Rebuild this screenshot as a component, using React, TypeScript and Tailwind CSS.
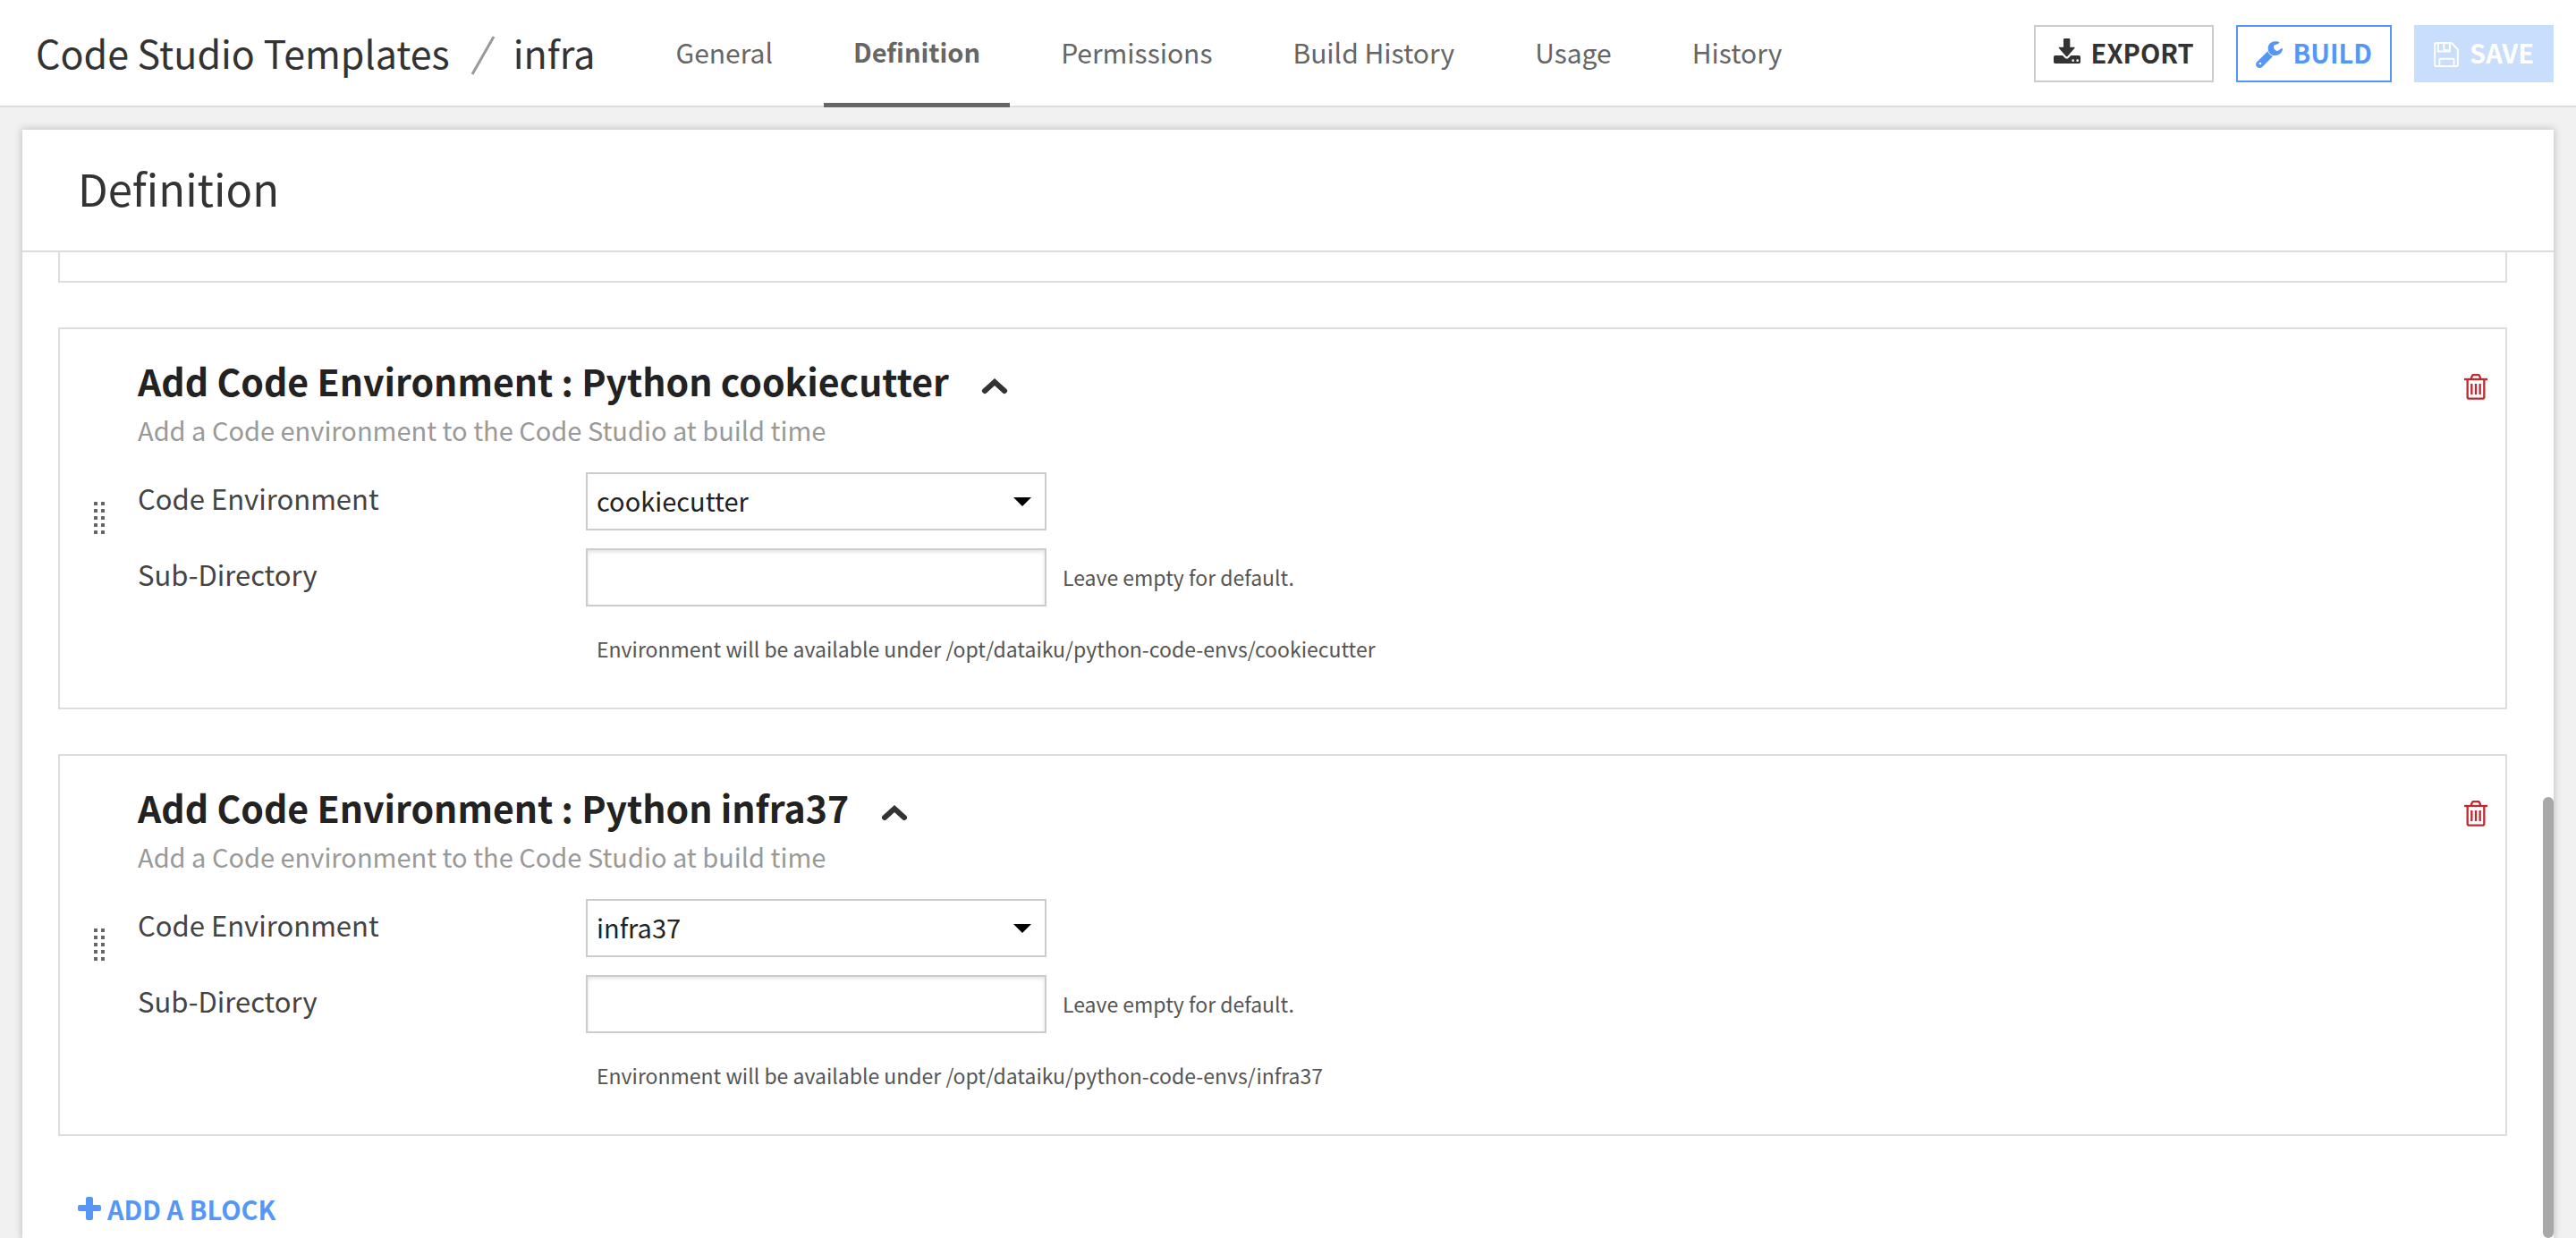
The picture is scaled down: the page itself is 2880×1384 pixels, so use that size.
import { useState } from "react";

const TABS = ["General", "Definition", "Permissions", "Build History", "Usage", "History"];
const ENVIRONMENTS = ["cookiecutter", "infra37"];

function ExportIcon() {
  return (
    <svg viewBox="0 0 90 84" className="mb-1 h-7 w-[30px] fill-current" aria-hidden="true">
      <path d="M36 0h16q3 0 3 3v26h14q4 0 1 4L47 59q-3 3-6 0L18 33q-3-4 1-4h14V3q0-3 3-3Z" />
      <path
        fillRule="evenodd"
        d="M5 57h25l9 9q5 4 10 0l9-9h27q5 0 5 5v17q0 5-5 5H5q-5 0-5-5V62q0-5 5-5Zm60 13a4 4 0 1 0 0 8 4 4 0 0 0 0-8Zm15 0a4 4 0 1 0 0 8 4 4 0 0 0 0-8Z"
      />
    </svg>
  );
}

function WrenchIcon() {
  return (
    <svg viewBox="0 0 90 90" className="mt-1 size-[30px] fill-current" aria-hidden="true">
      <path d="M66 1C50 0 40 12 41 26c1 14 11 23 24 22 13 0 23-9 25-21 0-3-2-4-5-2l-11 8c-7 0-13-5-14-12l1-7 15-6c4-2 4-5 0-6-3-1-6-1-10-1Z" />
      <path
        fillRule="evenodd"
        d="M40 34q5 13 17 17L22 86c-5 5-13 5-18 0-5-4-5-11 0-16Zm-25 37a4 4 0 1 0 0 8 4 4 0 0 0 0-8Z"
      />
    </svg>
  );
}

function SaveIcon() {
  return (
    <svg viewBox="0 0 84 85" className="mt-1 size-7 fill-none stroke-current" strokeWidth="6" strokeLinejoin="round" aria-hidden="true">
      <path d="M6 3h54l21 22v54q0 3-3 3H6q-3 0-3-3V6q0-3 3-3Z" />
      <path d="M14 3v29h40V3M34 4v24h16" />
      <path d="M19 82V60q0-3 3-3h43q3 0 3 3v22" />
    </svg>
  );
}

function TrashIcon() {
  return (
    <svg viewBox="0 0 78 87" className="h-[29px] w-[26px] fill-none stroke-current" strokeWidth="7" aria-hidden="true">
      <path d="M0 18h78" />
      <path d="M23 17l3-9q2-5 6-5h14q4 0 6 5l3 9" />
      <path d="M11 18v60q0 5 6 5h44q6 0 6-5V18" />
      <path d="M25 33v36M39 33v36M53 33v36" />
    </svg>
  );
}

function ChevronUp() {
  return (
    <svg viewBox="0 0 30 20" className="h-5 w-[30px] fill-none stroke-[#333]" strokeWidth="6" strokeLinecap="round" aria-hidden="true">
      <path d="M4 15 15 5l11 10" />
    </svg>
  );
}

function DragHandle() {
  return (
    <span className="grid cursor-grab grid-cols-2 gap-1" role="img" aria-label="Drag to reorder">
      {Array.from({ length: 10 }, (_, i) => (
        <span key={i} className="size-1 bg-[#666]" />
      ))}
    </span>
  );
}

function EnvironmentBlock({ name }: { name: string }) {
  const [env, setEnv] = useState(name);
  const [dir, setDir] = useState("");
  const envId = `env-${name}`;
  const dirId = `dir-${name}`;
  return (
    <section className="mt-[50px] flex border-2 border-[#ddd]">
      <div className="flex w-[87px] shrink-0 items-center pb-0.5 pl-[38px]">
        <DragHandle />
      </div>
      <div className="min-w-0 flex-1 pt-[27px] pb-[46px]">
        <div className="flex items-center gap-9">
          <h2 className="text-[41px] leading-[60px] font-bold text-[#222]">Add Code Environment : Python {name}</h2>
          <button type="button" aria-label="Collapse block" className="pt-[14px]">
            <ChevronUp />
          </button>
        </div>
        <p className="mt-[5px] text-[29px] leading-10 text-[#999]">Add a Code environment to the Code Studio at build time</p>
        <div className="mt-7 flex items-center">
          <label htmlFor={envId} className="w-[501px] shrink-0 pb-2 text-[31px] leading-10 text-[#444]">
            Code Environment
          </label>
          <div className="relative w-[515px]">
            <select
              id={envId}
              value={env}
              onChange={(e) => setEnv(e.target.value)}
              className="block h-[65px] w-full appearance-none border-2 border-[#ccc] bg-white pr-14 pb-0.5 pl-[10px] text-[29px] text-[#222]"
            >
              {ENVIRONMENTS.map((e) => (
                <option key={e}>{e}</option>
              ))}
            </select>
            <svg viewBox="0 0 20 10" className="pointer-events-none absolute top-[28px] right-[17px] h-2.5 w-5" aria-hidden="true">
              <path d="M0 0h20L10 10Z" />
            </svg>
          </div>
        </div>
        <div className="mt-5 flex items-center">
          <label htmlFor={dirId} className="w-[501px] shrink-0 pb-2 text-[31px] leading-10 text-[#444]">
            Sub-Directory
          </label>
          <input
            id={dirId}
            type="text"
            value={dir}
            onChange={(e) => setDir(e.target.value)}
            className="h-[65px] w-[515px] border-2 border-[#ccc] bg-white px-[10px] text-[29px] text-[#222] shadow-[inset_0_2px_4px_rgba(0,0,0,0.12)]"
          />
          <span className="ml-[18px] pb-0.5 text-[23px] leading-10 text-[#555]">Leave empty for default.</span>
        </div>
        <p className="mt-[27px] ml-[513px] text-[23px] leading-10 text-[#555]">
          Environment will be available under /opt/dataiku/python-code-envs/{env}
        </p>
      </div>
      <button type="button" aria-label="Delete block" className="mt-[50px] mr-5 self-start text-[#be2a30]">
        <TrashIcon />
      </button>
    </section>
  );
}

export default function App() {
  return (
    <div className="flex h-screen flex-col overflow-hidden bg-[#f1f1f1] font-['Noto_Sans_CJK_SC',sans-serif] text-[#333]">
      <header className="flex h-[120px] shrink-0 items-center bg-white pr-[25px] pl-10 shadow-[inset_0_-2px_0_#ddd]">
        <div className="flex items-center pb-1 text-[43px] leading-[60px]">
          <a href="#templates">Code Studio Templates</a>
          <svg viewBox="0 0 28 44" className="mt-2 ml-[23px] h-11 w-7 stroke-[#999]" strokeWidth="3" aria-hidden="true">
            <path d="M26 1 2 43" />
          </svg>
          <span className="ml-5">infra</span>
        </div>
        <nav className="ml-[57px] flex gap-6 self-stretch text-[30px]">
          {TABS.map((tab) => (
            <a
              key={tab}
              href={`#${tab.toLowerCase().replace(" ", "-")}`}
              aria-current={tab === "Definition" ? "page" : undefined}
              className={
                tab === "Definition"
                  ? "flex items-center border-b-[5px] border-[#666] px-[33px] pt-px text-[29px] font-bold text-[#666]"
                  : "flex items-center px-[33px] pb-1 text-[#666]"
              }
            >
              {tab}
            </a>
          ))}
        </nav>
        <div className="ml-auto flex gap-[25px] text-[29px] font-bold">
          <button type="button" className="flex h-16 items-center gap-3 border-2 border-[#ccc] px-5 pb-0.5">
            <ExportIcon />
            EXPORT
          </button>
          <button type="button" className="flex h-16 items-center gap-3 border-2 border-[#5597f6] px-5 pb-0.5 text-[#5597f6]">
            <WrenchIcon />
            BUILD
          </button>
          <button type="button" disabled className="flex h-16 items-center gap-3 border-2 border-[#c9defc] bg-[#c9defc] px-5 pb-0.5 text-white">
            <SaveIcon />
            SAVE
          </button>
        </div>
      </header>
      <main className="mx-[25px] mt-[25px] flex min-h-0 flex-1 flex-col bg-white shadow-[0_0_8px_1px_rgba(0,0,0,0.2)]">
        <h1 className="shrink-0 border-b-2 border-[#ddd] pt-[26px] pb-[31px] pl-[62px] text-[49px] leading-[78px]">Definition</h1>
        <div className="relative min-h-0 flex-1 overflow-hidden pr-[52px] pl-10">
          <div className="h-[34px] border-2 border-t-0 border-[#ddd]" />
          {ENVIRONMENTS.map((name) => (
            <EnvironmentBlock key={name} name={name} />
          ))}
          <button type="button" className="mt-[61px] ml-[22px] flex items-center gap-[7px] text-[29px] leading-10 font-bold text-[#5597f6]">
            <svg viewBox="0 0 26 26" className="size-[26px] fill-current" aria-hidden="true">
              <path d="M11 0h4q2 0 2 2v7h7q2 0 2 2v3q0 2-2 2h-7v8q0 2-2 2h-4q-2 0-2-2v-8H2q-2 0-2-2v-3q0-2 2-2h7V2q0-2 2-2Z" />
            </svg>
            ADD A BLOCK
          </button>
          <div className="absolute top-[609px] right-0 bottom-0 w-3 rounded-full bg-[#a8a8a8]" aria-hidden="true" />
        </div>
      </main>
    </div>
  );
}
